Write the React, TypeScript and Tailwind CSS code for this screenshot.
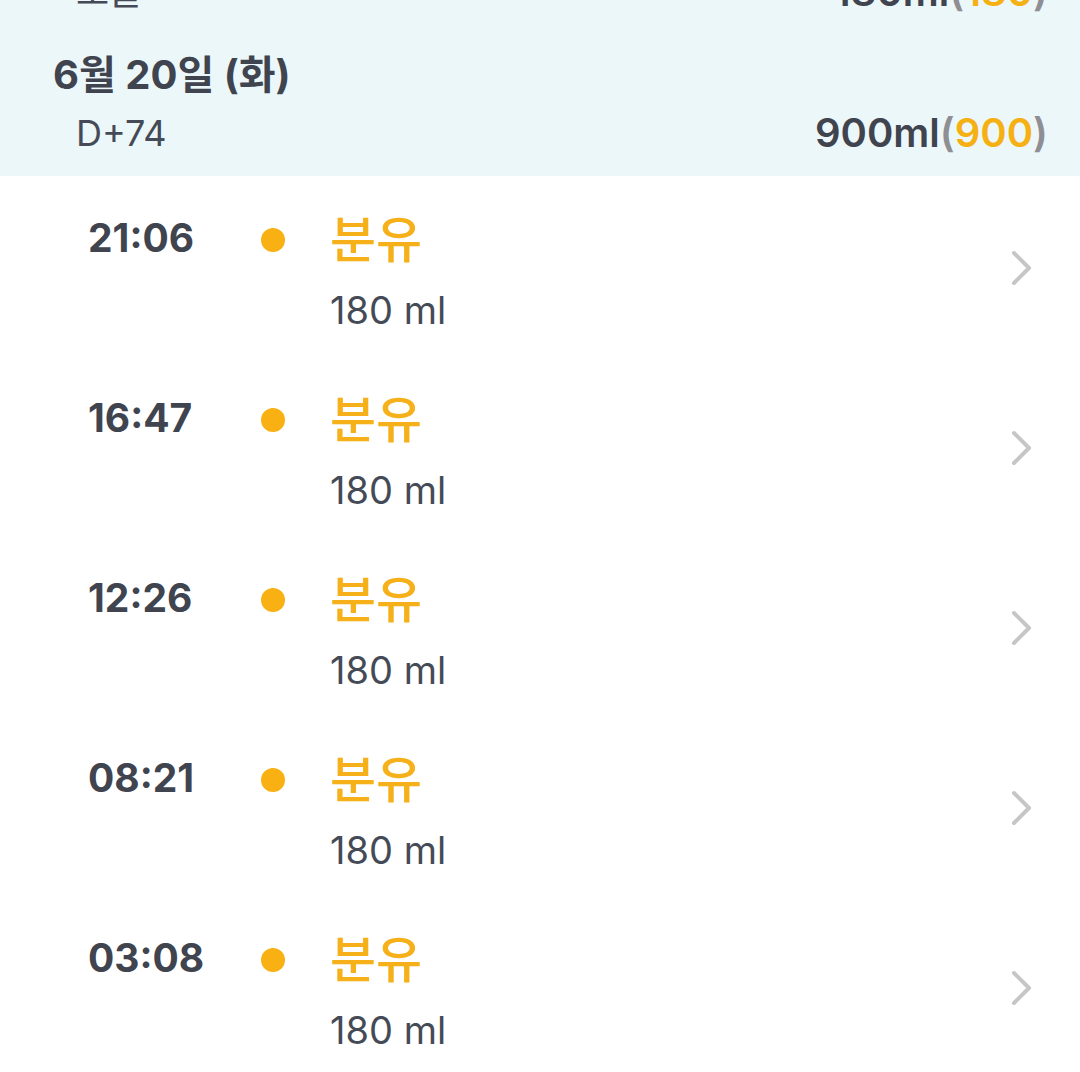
const font = { fontFamily: 'Inter, "Noto Sans CJK KR", sans-serif' };

const feeds = [
  { time: "21:06", amount: "180 ml" },
  { time: "16:47", amount: "180 ml" },
  { time: "12:26", amount: "180 ml" },
  { time: "08:21", amount: "180 ml" },
  { time: "03:08", amount: "180 ml" },
];

function Total({ ml, count }: { ml: number; count: number }) {
  return (
    <div className="text-[40px] font-semibold text-[#40444f]">
      {ml}ml<span className="text-[#8e8e93]">(</span>
      <span className="text-[#f5b014]">{count}</span>
      <span className="text-[#8e8e93]">)</span>
    </div>
  );
}

function Chevron() {
  return (
    <svg width="26" height="36" viewBox="0 0 26 36" fill="none">
      <path d="M5 3 L20 18 L5 33" stroke="#c6c6c9" strokeWidth="4" strokeLinecap="round" strokeLinejoin="round" />
    </svg>
  );
}

export default function App() {
  return (
    <div className="w-[1080px] h-[1072px] overflow-hidden bg-white" style={font}>
      {/* day header */}
      <div className="bg-[#ecf7fa] pb-[21px]">
        <div className="-mt-[30px] h-[44px] flex items-center justify-between pl-[76px] pr-[32px]">
          <span className="text-[36px] text-[#454a57]">오늘</span>
          <Total ml={180} count={180} />
        </div>
        <div className="mt-[39px] h-[44px] flex items-center pl-[53px] text-[40px] font-bold text-[#40444f]">
          6월 20일 (화)
        </div>
        <div className="mt-[14px] h-[44px] flex items-center justify-between pl-[76px] pr-[32px]">
          <span className="text-[36px] text-[#454a57]">D+74</span>
          <Total ml={900} count={900} />
        </div>
      </div>

      {feeds.map((f) => (
        <div key={f.time} className="h-[180px] flex">
          <div className="w-[173px] shrink-0 pl-[88px] pt-[40px] whitespace-nowrap">
            <div className="h-[44px] leading-[44px] text-[39px] font-bold text-[#40444f]">{f.time}</div>
          </div>
          <div className="w-[157px] shrink-0 pt-[52px]">
            <div className="ml-[88px] w-[24px] h-[24px] rounded-full bg-[#f8b012]" />
          </div>
          <div className="flex-1 pt-[36px]">
            <div className="h-[56px] leading-[56px] text-[50px] font-medium text-[#f6b01a]">분유</div>
            <div className="mt-[22px] h-[40px] leading-[40px] text-[38px] text-[#454a57]">{f.amount}</div>
          </div>
          <div className="pr-[45px] pt-[74px]">
            <Chevron />
          </div>
        </div>
      ))}
    </div>
  );
}
